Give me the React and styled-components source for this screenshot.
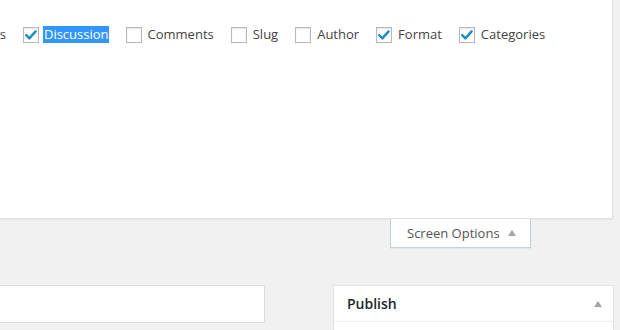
import React from "react";
import styled, { createGlobalStyle } from "styled-components";

const GlobalStyle = createGlobalStyle`
  html, body {
    margin: 0;
    padding: 0;
    background: #f1f1f1;
    font-family: "Open Sans", "Liberation Sans", sans-serif;
    color: #444;
    font-size: 13px;
    overflow: hidden;
  }
`;

const Page = styled.div`
  width: 620px;
  height: 330px;
  display: flex;
  flex-direction: column;
  overflow: hidden;

  & > * {
    flex-shrink: 0;
  }
`;

const Panel = styled.div`
  width: 612px;
  height: 218px;
  background: #fff;
  border-right: 1px solid #e1e1e1;
  border-bottom: 1px solid #e1e1e1;
  box-shadow: 0 1px 1px rgba(0, 0, 0, 0.04);
  overflow: hidden;
`;

const OptionRow = styled.div`
  display: flex;
  align-items: center;
  padding-top: 26px;
  margin-left: -101px;
  white-space: nowrap;
`;

const Option = styled.label`
  display: flex;
  align-items: center;
  margin-right: 17px;
  line-height: 16px;
`;

const Box = styled.span`
  box-sizing: border-box;
  width: 16px;
  height: 16px;
  border: 1px solid #b4b9be;
  background: #fff;
  box-shadow: inset 0 1px 2px rgba(0, 0, 0, 0.1);
  margin-right: ${({ $tight }) => ($tight ? 4 : 6)}px;
  display: flex;
  align-items: center;
  justify-content: center;
`;

const Label = styled.span`
  padding: ${({ $selected }) => ($selected ? "0 0 0 1px" : "0")};
  background: ${({ $selected }) => ($selected ? "#3297fd" : "transparent")};
  color: ${({ $selected }) => ($selected ? "#fff" : "#444")};
  line-height: 17px;
`;

const TabRow = styled.div`
  display: flex;
  padding-left: 390px;
`;

const Tab = styled.div`
  box-sizing: border-box;
  width: 141px;
  height: 29px;
  background: #fff;
  border: 1px solid #bdd2e3;
  border-top: none;
  box-shadow: 0 1px 1px rgba(0, 0, 0, 0.04);
  display: flex;
  align-items: center;
  padding-left: 16px;
  color: #555;
  font-size: 13px;
`;

const Arrow = styled.svg`
  margin-left: ${({ $gap }) => $gap || 0}px;
  display: block;
`;

const BottomRow = styled.div`
  display: flex;
  align-items: flex-start;
  margin-top: 37px;
`;

const TitleInput = styled.div`
  box-sizing: border-box;
  width: 265px;
  height: 38px;
  background: #fff;
  border: 1px solid #ddd;
  border-left: none;
`;

const Postbox = styled.div`
  box-sizing: border-box;
  width: 281px;
  height: 60px;
  margin-left: 68px;
  background: #fff;
  border: 1px solid #e5e5e5;
  box-shadow: 0 1px 1px rgba(0, 0, 0, 0.04);
`;

const PostboxHeader = styled.div`
  height: 35px;
  display: flex;
  align-items: center;
  justify-content: space-between;
  padding: 0 11px 0 13px;
  border-bottom: 1px solid #eee;
`;

const PostboxTitle = styled.h2`
  margin: 0;
  font-size: 14px;
  font-weight: 600;
  color: #23282d;
`;

const Check = () => (
  <svg width="14" height="14" viewBox="0 0 14 14">
    <path
      d="M2.2 7.2 L5.4 10.4 L11.6 3.4"
      fill="none"
      stroke="#1e8cbe"
      strokeWidth="2.4"
      strokeLinecap="round"
      strokeLinejoin="round"
    />
  </svg>
);

const UpArrow = ({ gap }) => (
  <Arrow $gap={gap} width="8" height="6" viewBox="0 0 8 6">
    <path d="M4 0 L8 6 L0 6 Z" fill="#a0a5aa" />
  </Arrow>
);

const options = [
  { name: "Custom Fields", checked: true },
  { name: "Discussion", checked: true, selected: true },
  { name: "Comments", checked: false },
  { name: "Slug", checked: false },
  { name: "Author", checked: false },
  { name: "Format", checked: true },
  { name: "Categories", checked: true },
];

export default function App() {
  return (
    <Page>
      <GlobalStyle />
      <Panel>
        <OptionRow>
          {options.map((o) => (
            <Option key={o.name}>
              <Box $tight={o.selected}>{o.checked && <Check />}</Box>
              <Label $selected={o.selected}>{o.name}</Label>
            </Option>
          ))}
        </OptionRow>
      </Panel>
      <TabRow>
        <Tab>
          Screen Options
          <UpArrow gap={8} />
        </Tab>
      </TabRow>
      <BottomRow>
        <TitleInput />
        <Postbox>
          <PostboxHeader>
            <PostboxTitle>Publish</PostboxTitle>
            <UpArrow />
          </PostboxHeader>
        </Postbox>
      </BottomRow>
    </Page>
  );
}
